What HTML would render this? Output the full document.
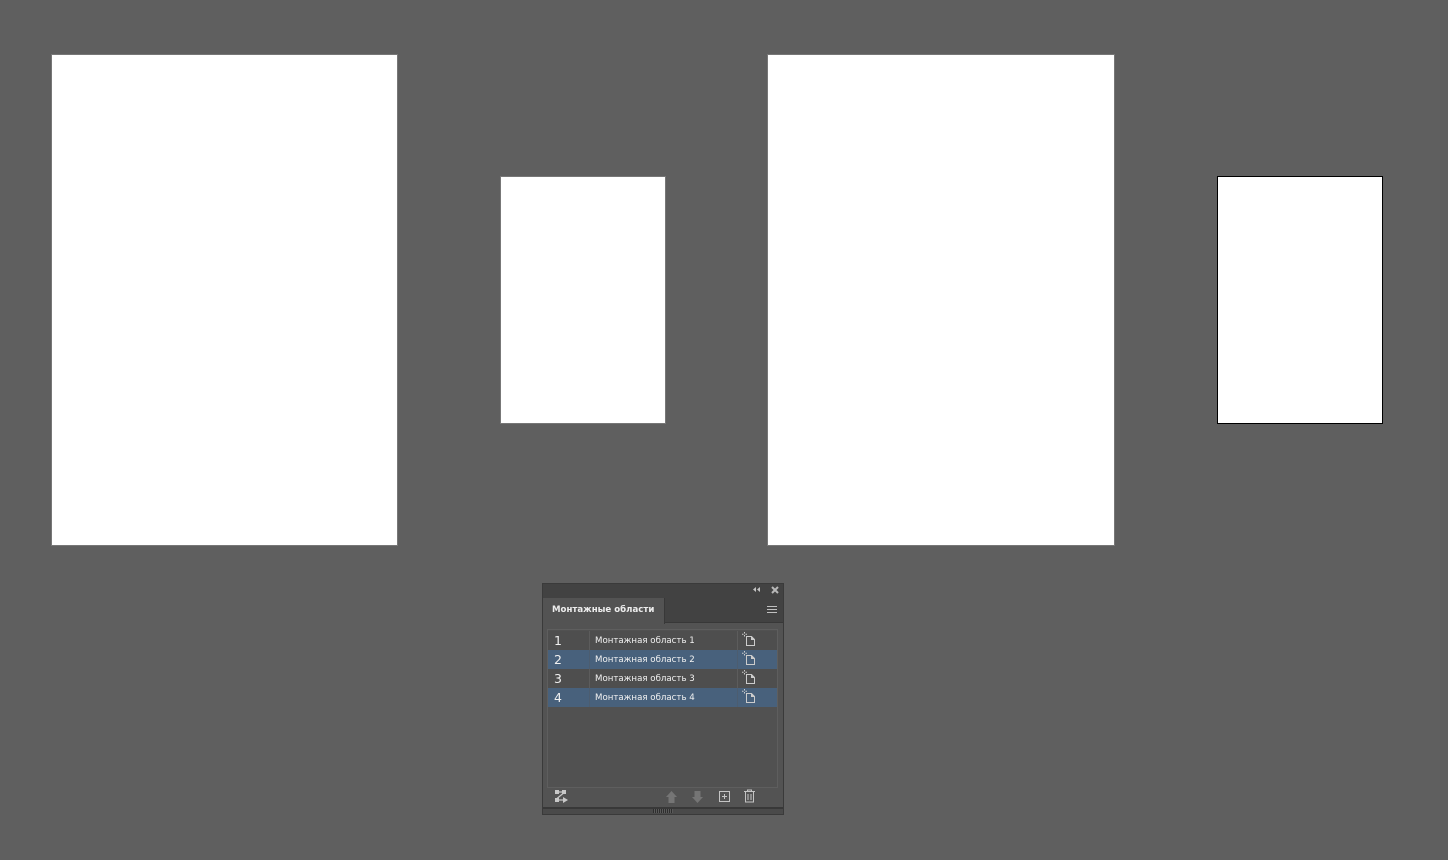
<!DOCTYPE html>
<html lang="ru">
<head>
<meta charset="utf-8">
<title>Монтажные области</title>
<style>
html,body{margin:0;padding:0;width:1448px;height:860px;overflow:hidden;background:#5f5f5f}
body{position:relative;font-family:"DejaVu Sans","Liberation Sans",sans-serif}
div,svg,span{position:absolute;box-sizing:border-box}
.ab{background:#fff;box-shadow:0 0 0 1px #777}
.panel{left:542px;top:583px;width:242px;height:232px;background:#535353;border:1px solid #3a3a3a}
.top{left:0;top:0;width:240px;height:14px;background:#424242}
.tabbar{left:0;top:14px;width:240px;height:25px;background:#424242;border-bottom:1px solid #383838}
.tab{left:0;top:14px;width:122px;height:26px;background:#535353;border-right:1px solid #383838}
.tabt{left:9px;top:5px;font-size:8.6px;line-height:14px;font-weight:bold;color:#ededed;white-space:nowrap}
.list{left:4px;top:45px;width:231px;height:159px;background:#515151;border:1px solid #5e5e5e}
.row{left:0;width:229px;height:19px;background:#4e4e4e}
.row.s{background:#48617c}
.row .n{left:6px;top:2px;font:12.5px/16px "DejaVu Sans",sans-serif;color:#f0f0f0}
.row .t{left:47px;top:4px;font-size:8.65px;line-height:13px;color:#f2f2f2;white-space:nowrap}
.row .d1,.row .d2{top:0;width:1px;height:19px;background:#5c5c5c}
.row .d1{left:41px}.row .d2{left:189px}
.row.s .d1,.row.s .d2{background:#4c5d70}
.row svg{left:194px;top:1px}
.foot{left:0;top:223px;width:240px;height:7px;background:#4a4a4a;border-top:2px solid #383838}
</style>
</head>
<body>
<div class="ab" style="left:52px;top:55px;width:345px;height:490px"></div>
<div class="ab" style="left:501px;top:177px;width:164px;height:246px"></div>
<div class="ab" style="left:768px;top:55px;width:346px;height:490px"></div>
<div style="left:1217px;top:176px;width:166px;height:248px;background:#fff;border:1px solid #000"></div>

<div class="panel">
  <div class="top"></div>
  <svg style="left:209px;top:2px" width="10" height="8" viewBox="0 0 10 8"><path d="M4 1v5L1 3.500zM8 1v5L5 3.500z" fill="#c4c4c4"/></svg>
  <svg style="left:227px;top:1px" width="10" height="10" viewBox="0 0 10 10"><path d="M2 2l6 6M8 2l-6 6" stroke="#b8b8b8" stroke-width="2" fill="none"/></svg>
  <div class="tabbar"></div>
  <div class="tab"><span class="tabt">Монтажные области</span></div>
  <svg style="left:223px;top:21px" width="12" height="10" viewBox="0 0 12 10"><path d="M1 1.500h10M1 4.500h10M1 7.500h10" stroke="#c0c0c0" stroke-width="1" fill="none"/></svg>

  <div class="list">
    <div class="row" style="top:1px"><span class="n">1</span><div class="d1"></div><span class="t">Монтажная область 1</span><div class="d2"></div>
      <svg width="16" height="16" viewBox="0 0 16 16"><path d="M2.500 0v1.500M2.500 3v1.500M0 2.200h1.500M3.500 2.200H5" stroke="#ccc" fill="none"/><path d="M4.500 4.500h5l3 3v6h-8z" stroke="#ccc" fill="none"/><path d="M9 4l4 4H9z" fill="#ccc"/></svg></div>
    <div class="row s" style="top:20px"><span class="n">2</span><div class="d1"></div><span class="t">Монтажная область 2</span><div class="d2"></div>
      <svg width="16" height="16" viewBox="0 0 16 16"><path d="M2.500 0v1.500M2.500 3v1.500M0 2.200h1.500M3.500 2.200H5" stroke="#ccc" fill="none"/><path d="M4.500 4.500h5l3 3v6h-8z" stroke="#ccc" fill="none"/><path d="M9 4l4 4H9z" fill="#ccc"/></svg></div>
    <div class="row" style="top:39px"><span class="n">3</span><div class="d1"></div><span class="t">Монтажная область 3</span><div class="d2"></div>
      <svg width="16" height="16" viewBox="0 0 16 16"><path d="M2.500 0v1.500M2.500 3v1.500M0 2.200h1.500M3.500 2.200H5" stroke="#ccc" fill="none"/><path d="M4.500 4.500h5l3 3v6h-8z" stroke="#ccc" fill="none"/><path d="M9 4l4 4H9z" fill="#ccc"/></svg></div>
    <div class="row s" style="top:58px"><span class="n">4</span><div class="d1"></div><span class="t">Монтажная область 4</span><div class="d2"></div>
      <svg width="16" height="16" viewBox="0 0 16 16"><path d="M2.500 0v1.500M2.500 3v1.500M0 2.200h1.500M3.500 2.200H5" stroke="#ccc" fill="none"/><path d="M4.500 4.500h5l3 3v6h-8z" stroke="#ccc" fill="none"/><path d="M9 4l4 4H9z" fill="#ccc"/></svg></div>
  </div>

  <svg style="left:11px;top:205px" width="15" height="16" viewBox="0 0 15 16"><path d="M1 1h4v4H1zM8 1h4v4H8zM1 9h4v4H1z" fill="#c8c8c8"/><path d="M5 3h4M9 4.500L3 9.500M4 11h6" stroke="#c8c8c8" stroke-width="1.200" fill="none"/><path d="M9 8l5 3-5 3z" fill="#c8c8c8"/></svg>
  <svg style="left:122px;top:206px" width="14" height="14" viewBox="0 0 14 14"><path d="M6.500 1l5.500 6H9.500v6h-6V7H1z" fill="#757575"/></svg>
  <svg style="left:148px;top:206px" width="14" height="14" viewBox="0 0 14 14"><path d="M6.500 13L1 7h2.500V1h6v6H12z" fill="#757575"/></svg>
  <svg style="left:175px;top:206px" width="13" height="13" viewBox="0 0 13 13"><path d="M1.500 1.500h10v10h-10z" stroke="#c4c4c4" fill="none"/><path d="M6.500 4v5M4 6.500h5" stroke="#c4c4c4" fill="none"/></svg>
  <svg style="left:200px;top:205px" width="13" height="14" viewBox="0 0 13 14"><path d="M1 2.500h11M4.500 2.500v-1.500h4v1.500M2.500 2.500v10.500h8V2.500M5 5v6M8 5v6" stroke="#c4c4c4" fill="none"/></svg>

  <div class="foot"></div>
  <div style="left:110px;top:225px;width:20px;height:4px;background:repeating-linear-gradient(90deg,#2e2e2e 0 1px,#5a5a5a 1px 2px)"></div>
</div>
</body>
</html>
